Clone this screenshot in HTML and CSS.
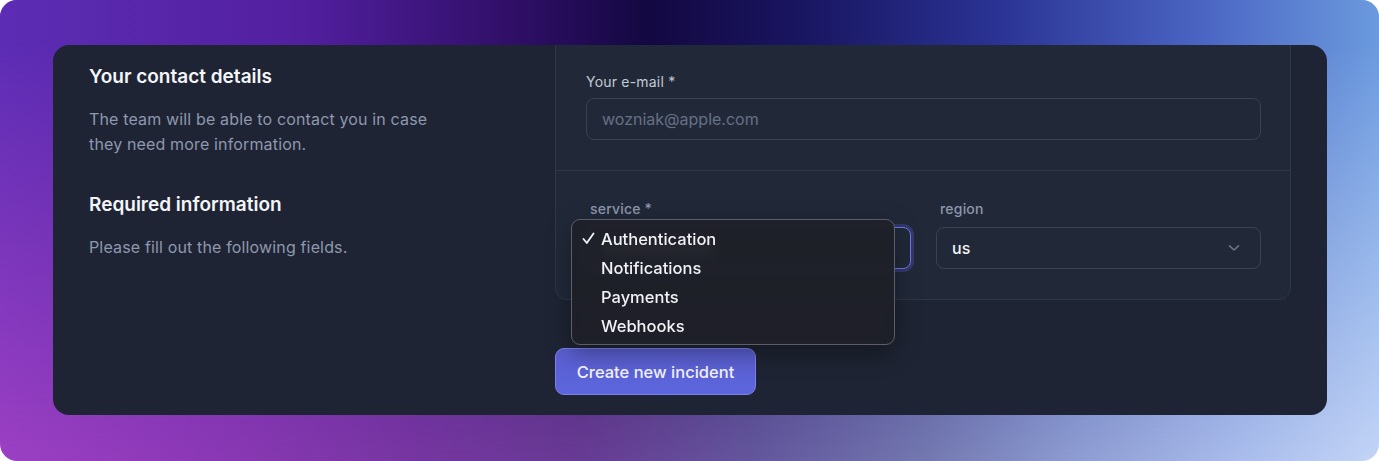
FILE: index.html
```html
<!DOCTYPE html>
<html lang="en">

<head>
  <meta charset="UTF-8">
  <meta name="viewport" content="width=device-width, initial-scale=1.0">
  <title>New incident</title>
  <link rel="stylesheet" href="styles.css">
</head>

<body>
  <div class="backdrop">
    <div class="card">
      <div class="intro">
        <h2>Your contact details</h2>
        <p>The team will be able to contact you in case they need more information.</p>
        <h2 class="intro-second">Required information</h2>
        <p>Please fill out the following fields.</p>
      </div>

      <div class="form-col">
        <div class="panel">
          <div class="panel-section section-email">
            <label class="label-light" for="email">Your e-mail *</label>
            <input type="text" id="email" class="text-input" placeholder="wozniak@apple.com">
          </div>
          <div class="panel-section section-fields">
            <div class="field">
              <label class="label-dim">service *</label>
              <div class="select-wrap">
                <div class="select select-focused">Authentication</div>
                <ul class="menu">
                  <li>
                    <svg class="check" width="13" height="13" viewBox="0 0 13 13">
                      <path d="M1.5 7 L4.8 11 L11.5 1.5" fill="none" stroke="#f2f3f6" stroke-width="1.8"
                        stroke-linecap="round" stroke-linejoin="round" />
                    </svg>
                    Authentication
                  </li>
                  <li><span class="check"></span>Notifications</li>
                  <li><span class="check"></span>Payments</li>
                  <li><span class="check"></span>Webhooks</li>
                </ul>
              </div>
            </div>
            <div class="field">
              <label class="label-dim">region</label>
              <div class="select">
                <span>us</span>
                <svg class="chevron" width="12" height="8" viewBox="0 0 12 8">
                  <path d="M1.5 1.8 L6 6 L10.5 1.8" fill="none" stroke="#6b7488" stroke-width="1.6"
                    stroke-linecap="round" stroke-linejoin="round" />
                </svg>
              </div>
            </div>
          </div>
        </div>

        <button class="button-create">Create new incident</button>
      </div>
    </div>
  </div>
</body>

</html>
```

FILE: styles.css
```css
body {
  box-sizing: border-box;
  font-family: Inter, "Noto Sans", sans-serif;
  margin: 0px;
  padding: 0px;
  background-color: white;
}

.backdrop {
  position: relative;
  height: 461px;
  box-sizing: border-box;
  padding: 45px 52px 47px 53px;
  border-radius: 17px;
  overflow: hidden;
  background: linear-gradient(90deg, #9c40c4 0%, #8c39b6 15%, #7736a2 30%, #683b94 42%, #64589e 55%, #7478b0 67%, #8e9dd2 78%, #aabdec 90%, #c4d5f7 100%);
}

/* top half of the background, faded down over the bottom colours */
.backdrop::before {
  content: "";
  position: absolute;
  inset: 0;
  background: linear-gradient(90deg, #5c2db4 0%, #521f9f 22%, #2e0e64 38%, #130841 47%, #191560 58%, #2a3292 72%, #4a64c2 87%, #6b9ade 100%);
  -webkit-mask-image: linear-gradient(to bottom, #000 0%, #000 10%, transparent 100%);
  mask-image: linear-gradient(to bottom, #000 0%, #000 10%, transparent 100%);
}

.card {
  position: relative;
  z-index: 1;
  display: grid;
  grid-template-columns: 430px 1fr;
  column-gap: 36px;
  padding: 0px 36px 20px 36px;
  border-radius: 16px;
  background-color: #1e2433;
  overflow: hidden;
}

.intro {
  padding-top: 18px;
}

.intro h2 {
  margin: 0px;
  font-size: 19px;
  line-height: 28px;
  font-weight: 600;
  color: #f3f5f9;
}

.intro p {
  max-width: 360px;
  margin: 16px 0px 0px 0px;
  font-size: 16px;
  line-height: 25px;
  letter-spacing: 0.15px;
  color: #8e98ae;
}

.intro .intro-second {
  margin-top: 34px;
}

.form-col {
  display: flex;
  flex-direction: column;
  align-items: flex-start;
}

.panel {
  align-self: stretch;
  margin-top: -20px;
  border: solid 1px #2e3647;
  border-radius: 12px;
  background-color: #212939;
}

.panel-section {
  padding: 0px 29px 30px 30px;
}

.section-email {
  padding-top: 46px;
  border-bottom: solid 1px #2e3647;
}

.section-fields {
  padding-top: 28px;
  padding-bottom: 30px;
  display: grid;
  grid-template-columns: 1fr 1fr;
  column-gap: 25px;
}

label {
  display: block;
  font-size: 14px;
  line-height: 20px;
  font-weight: 500;
  letter-spacing: 0.2px;
}

.label-light {
  color: #c3c9d4;
  font-weight: 400;
  margin-bottom: 6px;
}

.label-dim {
  color: #8d96aa;
  margin-bottom: 8px;
  padding-left: 4px;
}

.text-input {
  display: block;
  width: 100%;
  height: 42px;
  box-sizing: border-box;
  padding: 0px 15px;
  border: solid 1px #3a4253;
  border-radius: 8px;
  background-color: #212939;
  font-family: Inter, sans-serif;
  font-size: 16px;
  color: white;
  outline: none;
}

.text-input::placeholder {
  color: #667085;
}

.select-wrap {
  position: relative;
}

.select {
  display: flex;
  align-items: center;
  justify-content: space-between;
  height: 42px;
  box-sizing: border-box;
  padding: 0px 20px 0px 15px;
  border: solid 1px #3a4253;
  border-radius: 8px;
  background-color: #212939;
  font-size: 16px;
  font-weight: 500;
  color: #f5f6f8;
}

.select-focused {
  border-color: #6f76f0;
  box-shadow: 0px 0px 0px 3px rgba(92, 98, 214, 0.3);
}

.chevron {
  display: block;
}

/* the open native popup of the service select */
.menu {
  position: absolute;
  top: -8px;
  left: -15px;
  width: 324px;
  box-sizing: border-box;
  margin: 0px;
  padding: 4px 0px;
  list-style: none;
  border: solid 1px #5b5e69;
  border-radius: 9px;
  background-color: rgba(30, 31, 39, 0.9);
  -webkit-backdrop-filter: blur(6px);
  backdrop-filter: blur(6px);
  box-shadow: 0px 8px 24px rgba(0, 0, 0, 0.35);
}

.menu li {
  display: flex;
  align-items: center;
  height: 29px;
  padding-left: 10px;
  font-size: 16.5px;
  font-weight: 500;
  color: #f2f3f6;
}

.check {
  display: inline-block;
  flex: none;
  width: 13px;
  margin-right: 6px;
}

.button-create {
  margin-top: 48px;
  width: 201px;
  height: 47px;
  border: solid 1px #7b82ee;
  border-radius: 9px;
  background: linear-gradient(180deg, #5a5ecf 0%, #5d66de 100%);
  font-family: Inter, sans-serif;
  font-size: 16.5px;
  font-weight: 500;
  color: #f3f4ff;
  cursor: pointer;
}
```
